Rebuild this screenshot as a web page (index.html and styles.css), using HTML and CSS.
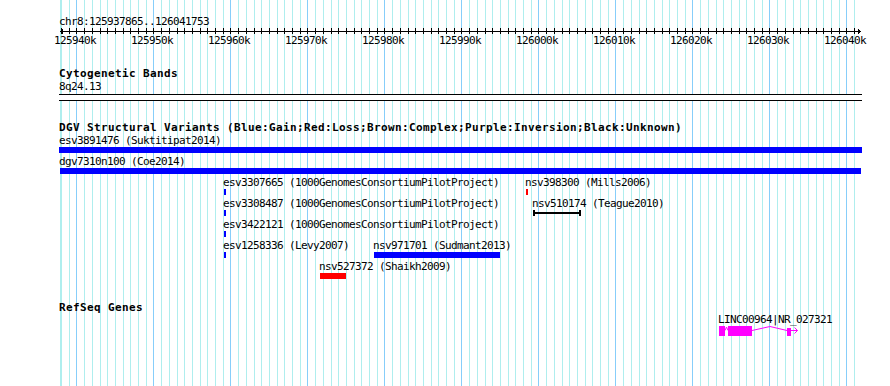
FILE: index.html
```html
<!DOCTYPE html>
<html>
<head>
<meta charset="utf-8">
<title>chr8:125937865..126041753</title>
<link rel="stylesheet" href="styles.css">
</head>
<body>
<div class="browser">
  <svg class="grid" width="890" height="386" viewBox="0 0 890 386" shape-rendering="crispEdges">
    <path class="grid-minor" d="M60.5 0v386M61.5 0v386M69.5 0v386M84.5 0v386M92.5 0v386M100.5 0v386M107.5 0v386M115.5 0v386M123.5 0v386M130.5 0v386M138.5 0v386M146.5 0v386M161.5 0v386M169.5 0v386M177.5 0v386M184.5 0v386M192.5 0v386M200.5 0v386M207.5 0v386M215.5 0v386M223.5 0v386M238.5 0v386M246.5 0v386M254.5 0v386M261.5 0v386M269.5 0v386M277.5 0v386M284.5 0v386M292.5 0v386M300.5 0v386M315.5 0v386M323.5 0v386M331.5 0v386M338.5 0v386M346.5 0v386M354.5 0v386M361.5 0v386M369.5 0v386M377.5 0v386M392.5 0v386M400.5 0v386M408.5 0v386M415.5 0v386M423.5 0v386M431.5 0v386M438.5 0v386M446.5 0v386M454.5 0v386M469.5 0v386M477.5 0v386M485.5 0v386M492.5 0v386M500.5 0v386M508.5 0v386M515.5 0v386M523.5 0v386M531.5 0v386M546.5 0v386M554.5 0v386M562.5 0v386M569.5 0v386M577.5 0v386M585.5 0v386M592.5 0v386M600.5 0v386M608.5 0v386M623.5 0v386M631.5 0v386M639.5 0v386M646.5 0v386M654.5 0v386M662.5 0v386M669.5 0v386M677.5 0v386M685.5 0v386M700.5 0v386M708.5 0v386M716.5 0v386M723.5 0v386M731.5 0v386M739.5 0v386M746.5 0v386M754.5 0v386M762.5 0v386M777.5 0v386M785.5 0v386M793.5 0v386M800.5 0v386M808.5 0v386M816.5 0v386M823.5 0v386M831.5 0v386M839.5 0v386M854.5 0v386"/>
    <path class="grid-major" d="M76.5 0v386M153.5 0v386M230.5 0v386M307.5 0v386M384.5 0v386M461.5 0v386M538.5 0v386M615.5 0v386M692.5 0v386M769.5 0v386M846.5 0v386"/>
  </svg>

  <div class="panel">
    <div class="track ruler-track">
      <div class="seg-label">chr8:125937865..126041753</div>
      <svg class="ruler" width="803" height="6" viewBox="0 0 803 6" shape-rendering="crispEdges">
        <rect x="1" y="3" width="801" height="1"/>
        <rect x="2" y="2" width="1" height="3"/>
        <rect x="3" y="1" width="1" height="5"/>
        <rect x="800" y="2" width="1" height="3"/>
        <rect x="799" y="1" width="1" height="5"/>
        <path class="ticks" d="M2.5 0v6M10.5 0v6M17.5 0v6M25.5 0v6M33.5 0v6M41.5 0v6M48.5 0v6M56.5 0v6M64.5 0v6M71.5 0v6M79.5 0v6M87.5 0v6M94.5 0v6M102.5 0v6M110.5 0v6M118.5 0v6M125.5 0v6M133.5 0v6M141.5 0v6M148.5 0v6M156.5 0v6M164.5 0v6M171.5 0v6M179.5 0v6M187.5 0v6M195.5 0v6M202.5 0v6M210.5 0v6M218.5 0v6M225.5 0v6M233.5 0v6M241.5 0v6M248.5 0v6M256.5 0v6M264.5 0v6M272.5 0v6M279.5 0v6M287.5 0v6M295.5 0v6M302.5 0v6M310.5 0v6M318.5 0v6M325.5 0v6M333.5 0v6M341.5 0v6M349.5 0v6M356.5 0v6M364.5 0v6M372.5 0v6M379.5 0v6M387.5 0v6M395.5 0v6M402.5 0v6M410.5 0v6M418.5 0v6M426.5 0v6M433.5 0v6M441.5 0v6M449.5 0v6M456.5 0v6M464.5 0v6M472.5 0v6M479.5 0v6M487.5 0v6M495.5 0v6M503.5 0v6M510.5 0v6M518.5 0v6M526.5 0v6M533.5 0v6M541.5 0v6M549.5 0v6M556.5 0v6M564.5 0v6M572.5 0v6M580.5 0v6M587.5 0v6M595.5 0v6M603.5 0v6M610.5 0v6M618.5 0v6M626.5 0v6M633.5 0v6M641.5 0v6M649.5 0v6M657.5 0v6M664.5 0v6M672.5 0v6M680.5 0v6M687.5 0v6M695.5 0v6M703.5 0v6M710.5 0v6M718.5 0v6M726.5 0v6M734.5 0v6M741.5 0v6M749.5 0v6M757.5 0v6M764.5 0v6M772.5 0v6M780.5 0v6M787.5 0v6M795.5 0v6"/>
      </svg>
      <div class="tick-labels">
        <span class="tick" style="left:-5px">125940k</span>
        <span class="tick" style="left:72px">125950k</span>
        <span class="tick" style="left:149px">125960k</span>
        <span class="tick" style="left:226px">125970k</span>
        <span class="tick" style="left:303px">125980k</span>
        <span class="tick" style="left:380px">125990k</span>
        <span class="tick" style="left:457px">126000k</span>
        <span class="tick" style="left:534px">126010k</span>
        <span class="tick" style="left:611px">126020k</span>
        <span class="tick" style="left:688px">126030k</span>
        <span class="tick" style="left:765px">126040k</span>
      </div>
    </div>

    <div class="track cyto-track">
      <div class="track-title">Cytogenetic Bands</div>
      <div class="band-label">8q24.13</div>
      <div class="band"></div>
    </div>

    <div class="track dgv-track">
      <div class="track-title">DGV Structural Variants (Blue:Gain;Red:Loss;Brown:Complex;Purple:Inversion;Black:Unknown)</div>
      <div class="row">
        <div class="feature edge" style="left:0px">
          <span class="label">esv3891476 (Suktitipat2014)</span>
          <span class="bar gain" style="width:803px"></span>
        </div>
      </div>
      <div class="row">
        <div class="feature" style="left:1px">
          <span class="label">dgv7310n100 (Coe2014)</span>
          <span class="bar gain" style="width:801px"></span>
        </div>
      </div>
      <div class="row">
        <div class="feature" style="left:165px">
          <span class="label">esv3307665 (1000GenomesConsortiumPilotProject)</span>
          <span class="bar gain" style="width:2px"></span>
        </div>
        <div class="feature" style="left:467px">
          <span class="label">nsv398300 (Mills2006)</span>
          <span class="bar loss" style="width:2px"></span>
        </div>
      </div>
      <div class="row">
        <div class="feature" style="left:165px">
          <span class="label">esv3308487 (1000GenomesConsortiumPilotProject)</span>
          <span class="bar gain" style="width:2px"></span>
        </div>
        <div class="feature" style="left:474px">
          <span class="label">nsv510174 (Teague2010)</span>
          <span class="bar span-glyph" style="width:48px"></span>
        </div>
      </div>
      <div class="row">
        <div class="feature" style="left:165px">
          <span class="label">esv3422121 (1000GenomesConsortiumPilotProject)</span>
          <span class="bar gain" style="width:2px"></span>
        </div>
      </div>
      <div class="row">
        <div class="feature" style="left:165px">
          <span class="label">esv1258336 (Levy2007)</span>
          <span class="bar gain" style="width:2px"></span>
        </div>
        <div class="feature" style="left:315px">
          <span class="label">nsv971701 (Sudmant2013)</span>
          <span class="bar gain" style="width:126px"></span>
        </div>
      </div>
      <div class="row">
        <div class="feature" style="left:261px">
          <span class="label">nsv527372 (Shaikh2009)</span>
          <span class="bar loss" style="width:26px"></span>
        </div>
      </div>
    </div>

    <div class="track gene-track">
      <div class="track-title">RefSeq Genes</div>
      <div class="gene-lane">
        <div class="feature" style="left:660px">
          <span class="label">LINC00964|NR_027321</span>
          <svg class="gene-model" width="82" height="10" viewBox="0 0 82 10">
            <rect class="exon" x="0" y="0" width="6" height="10"/>
            <polyline class="intron" points="6,4.5 7.5,1 9,4.5"/>
            <rect class="exon" x="9" y="0" width="24" height="10"/>
            <polyline class="intron" points="33,4.5 51,0.5 68,4.5"/>
            <rect class="exon" x="68" y="2" width="4" height="8"/>
            <path class="intron" d="M72 4.5H78.5M75.5 1.5L78.5 4.5L75.5 7.5"/>
          </svg>
        </div>
      </div>
    </div>
  </div>
</div>
</body>
</html>
```

FILE: styles.css
```css
body {
  margin: 0;
  background: #ffffff;
}

.browser {
  position: relative;
  width: 890px;
  height: 386px;
  overflow: hidden;
  background: #ffffff;
  color: #000000;
  font-family: "DejaVu Sans Mono", "Liberation Mono", monospace;
  font-size: 11px;
  line-height: 13px;
  letter-spacing: -0.623px;
}

.grid {
  position: absolute;
  left: 0;
  top: 0;
}

.grid-minor {
  fill: none;
  stroke: #afeeee;
  stroke-width: 1;
}

.grid-major {
  fill: none;
  stroke: #87cefa;
  stroke-width: 1;
}

.panel {
  position: relative;
  width: 803px;
  padding: 15px 0 0 59px;
}

.seg-label,
.band-label,
.track-title,
.label,
.tick {
  white-space: nowrap;
}

.ruler {
  display: block;
  fill: #000000;
}

.ticks {
  fill: none;
  stroke: #000000;
  stroke-width: 1;
}

.tick-labels {
  position: relative;
  height: 13px;
}

.tick {
  position: absolute;
  top: 0;
}

.track-title {
  font-weight: bold;
  letter-spacing: 0.377px;
}

.cyto-track,
.dgv-track,
.gene-track {
  margin-top: 20px;
}

.band {
  width: 803px;
  height: 7px;
  margin-top: 1px;
  box-sizing: border-box;
  border-top: 1px solid #000000;
  border-bottom: 1px solid #000000;
  background: #ffffff;
}

.row {
  position: relative;
  height: 21px;
}

.feature {
  position: absolute;
  top: 0;
}

.label {
  display: block;
  margin-left: -1px;
}

.feature.edge .label {
  margin-left: 0;
}

.bar {
  display: block;
  height: 6px;
}

.gain {
  background: #0000ff;
}

.loss {
  background: #ff0000;
}

.span-glyph {
  position: relative;
  box-sizing: border-box;
  border-left: 2px solid #000000;
  border-right: 2px solid #000000;
}

.span-glyph::before {
  content: "";
  position: absolute;
  left: 0;
  right: 0;
  top: 2px;
  height: 2px;
  background: #000000;
}

.gene-lane {
  position: relative;
  height: 30px;
  margin-top: -1px;
}

.gene-model {
  display: block;
}

.exon {
  fill: #ff00ff;
}

.intron {
  fill: none;
  stroke: #ff00ff;
  stroke-width: 1;
}
```
